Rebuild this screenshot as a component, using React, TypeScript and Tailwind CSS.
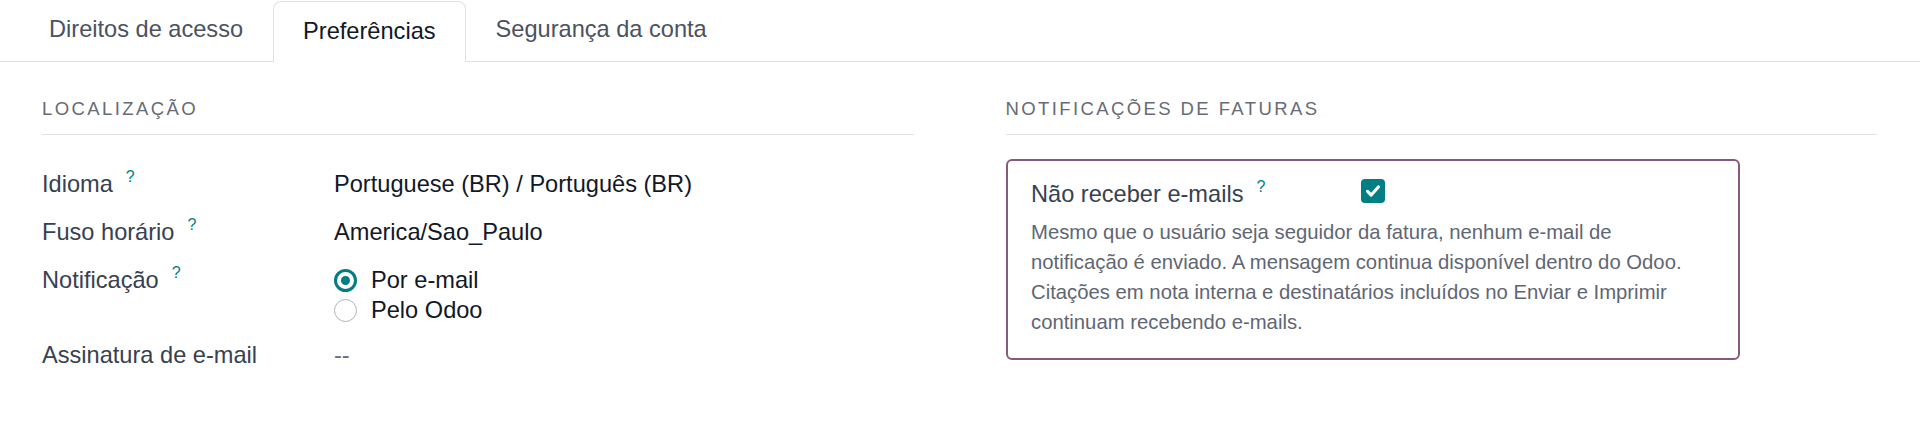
import React from "react";

const tabs = ["Direitos de acesso", "Preferências", "Segurança da conta"];

function Help() {
  return (
    <span className="ml-[13px] align-top text-[16px] leading-none text-[#017e84]">
      ?
    </span>
  );
}

function Radio({ checked, label }: { checked: boolean; label: string }) {
  return (
    <div className="flex h-[30px] items-center">
      {checked ? (
        <span className="flex h-[23px] w-[23px] items-center justify-center rounded-full border-[3.5px] border-[#017e84] bg-white">
          <span className="h-[9px] w-[9px] rounded-full bg-[#017e84]" />
        </span>
      ) : (
        <span className="h-[23px] w-[23px] rounded-full border-[1.5px] border-[#adb5bd] bg-white" />
      )}
      <span className="ml-[14px] text-[#111827]">{label}</span>
    </div>
  );
}

export default function App() {
  const rows = [
    { label: "Idioma", help: true, value: "Portuguese (BR) / Português (BR)" },
    { label: "Fuso horário", help: true, value: "America/Sao_Paulo" },
  ];

  return (
    <div
      className="min-h-[443px] w-full bg-white text-[23.6px] leading-[30px] text-[#374151]"
      style={{ fontFamily: '"Liberation Sans", Arial, sans-serif' }}>
      {/* tabs */}
      <div className="flex h-[62px] border-b border-[#dee2e6] pl-[19px]">
        {tabs.map((tab, index) => {
          return (
            <div
              key={index}
              className={`relative pt-[14px] ${
                index === 1
                  ? "-mb-px mt-px rounded-t-[8px] border border-b-0 border-[#dee2e6] bg-white px-[29px] text-[#111827]"
                  : "px-[30px] text-[#4b5260]"
              }`}>
              {tab}
            </div>
          );
        })}
      </div>

      <div className="grid grid-cols-2 gap-x-[92px] pl-[42px] pr-[43px] pt-[35px]">
        {/* left column */}
        <div>
          <div className="border-b border-[#dee2e6] pb-[13px] text-[18.5px] leading-[24px] tracking-[2.4px] text-[#666b75]">
            LOCALIZAÇÃO
          </div>
          <div className="mt-[34px] grid grid-cols-[292px_1fr] gap-y-[18px]">
            {rows.map((row, index) => (
              <React.Fragment key={index}>
                <div>
                  {row.label}
                  {row.help && <Help />}
                </div>
                <div className="text-[#111827]">{row.value}</div>
              </React.Fragment>
            ))}
            <div>
              Notificação
              <Help />
            </div>
            <div className="-mb-[3px]">
              <Radio checked label="Por e-mail" />
              <Radio checked={false} label="Pelo Odoo" />
            </div>
            <div>Assinatura de e-mail</div>
            <div className="text-[#6b7280]">--</div>
          </div>
        </div>

        {/* right column */}
        <div>
          <div className="border-b border-[#dee2e6] pb-[13px] text-[18.5px] leading-[24px] tracking-[2.4px] text-[#666b75]">
            NOTIFICAÇÕES DE FATURAS
          </div>
          <div className="mt-[24px] w-[734px] rounded-[6px] border-[2.5px] border-[#875a7b] pb-[21px] pl-[23.5px] pr-[24px] pt-[17.5px]">
            <div className="flex items-start">
              <div className="w-[330px] text-[#374151]">
                Não receber e-mails
                <Help />
              </div>
              <div className="flex h-[24px] w-[24px] items-center justify-center rounded-[4px] bg-[#017e84]">
                <svg viewBox="0 0 16 16" className="h-[18px] w-[18px]">
                  <path
                    d="M3.2 8.4 L6.4 11.6 L12.8 4.4"
                    fill="none"
                    stroke="white"
                    strokeWidth="2.8"
                    strokeLinecap="round"
                    strokeLinejoin="round"
                  />
                </svg>
              </div>
            </div>
            <p className="mt-[8px] text-[20.3px] leading-[30px] text-[#5f6673]">
              Mesmo que o usuário seja seguidor da fatura, nenhum e-mail de
              <br />
              notificação é enviado. A mensagem continua disponível dentro do
              Odoo.
              <br />
              Citações em nota interna e destinatários incluídos no Enviar e
              Imprimir
              <br />
              continuam recebendo e-mails.
            </p>
          </div>
        </div>
      </div>
    </div>
  );
}
